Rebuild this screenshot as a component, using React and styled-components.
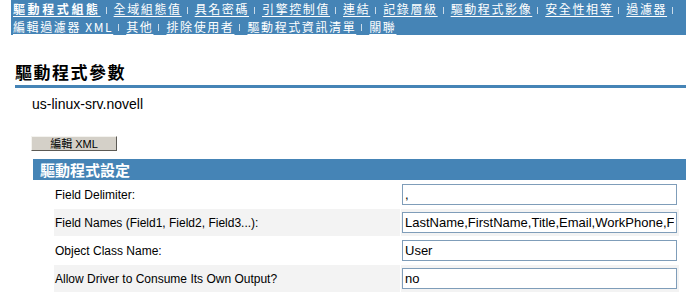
import React from 'react';
import styled, { createGlobalStyle } from 'styled-components';

const GlobalStyle = createGlobalStyle`
  html, body {
    margin: 0;
    padding: 0;
    background: #ffffff;
  }
  body {
    font-family: "Liberation Sans", "Noto Sans CJK TC", sans-serif;
    color: #000;
  }
`;

const Page = styled.div`
  width: 686px;
  height: 302px;
  overflow: hidden;
`;

const NavBar = styled.div`
  margin-left: 11px;
  height: 35px;
  background: #4584b6;
  padding: 0 0 0 2px;
  box-sizing: border-box;
  font-family: "Noto Sans CJK TC", sans-serif;
  font-size: 12px;
  color: #fff;
`;

const NavLine = styled.div`
  display: flex;
  align-items: center;
  white-space: nowrap;
  height: 17.5px;
  line-height: 17.5px;
`;

const NavLink = styled.a`
  color: #fff;
  text-decoration: underline;
  text-underline-offset: 2px;
  font-weight: ${({ current }) => (current ? 700 : 400)};
  letter-spacing: ${({ current }) => (current ? '2.6px' : '1.6px')};
  cursor: pointer;
`;

const Sep = styled.span`
  display: inline-block;
  width: 1px;
  height: 7px;
  margin: 3px 7px 0 5px;
  background: #c9dbea;
`;

const Heading = styled.h1`
  margin: 27px 0 0 15px;
  padding: 0 0 3px 0;
  font-family: "Noto Sans CJK TC", sans-serif;
  font-size: 17px;
  line-height: 20px;
  font-weight: 700;
  letter-spacing: 1.5px;
  border-bottom: 3px solid #4584b6;
`;

const Host = styled.div`
  margin: 8px 0 0 32px;
  font-size: 14px;
  line-height: 16px;
`;

const EditButton = styled.button`
  display: block;
  margin: 24px 0 0 31px;
  width: 86px;
  height: 15px;
  padding: 0;
  background: #d4d0c8;
  border: 1px solid;
  border-color: #f4f3ef #5c5a55 #5c5a55 #f4f3ef;
  font-family: "Liberation Sans", "Noto Sans CJK TC", sans-serif;
  font-size: 11px;
  line-height: 12px;
  color: #000;
`;

const Section = styled.div`
  margin: 8px 0 0 33px;
`;

const SectionBar = styled.div`
  height: 21px;
  background: #4584b6;
  color: #fff;
  padding-left: 7px;
  font-family: "Noto Sans CJK TC", sans-serif;
  font-size: 15px;
  line-height: 21px;
  font-weight: 700;
`;

const Grid = styled.div`
  display: grid;
  grid-template-columns: 346px 278px;
  column-gap: 1px;
  margin-left: 21px;
  padding-top: 1px;
`;

const Label = styled.div`
  height: 27px;
  margin-bottom: 1px;
  background: ${({ shaded }) => (shaded ? '#f3f3f3' : '#ffffff')};
  display: flex;
  align-items: center;
  padding-left: 1px;
  font-size: 12px;
`;

const ValueCell = styled.div`
  height: 27px;
  margin-bottom: 1px;
  background: ${({ shaded }) => (shaded ? '#f3f3f3' : '#ffffff')};
  display: flex;
  align-items: center;
  padding-left: 1px;
`;

const TextInput = styled.input`
  width: 275px;
  height: 21px;
  box-sizing: border-box;
  border: 1px solid #7f9db9;
  padding: 0 2px;
  font-family: "Liberation Sans", sans-serif;
  font-size: 13px;
  color: #000;
  background: #fff;
  outline: none;
`;

const navRow1 = ['全域組態值', '具名密碼', '引擎控制值', '連結', '記錄層級', '驅動程式影像', '安全性相等', '過濾器'];
const navRow2 = ['編輯過濾器 XML', '其他', '排除使用者', '驅動程式資訊清單', '關聯'];

const fields = [
  { label: 'Field Delimiter:', value: ',' },
  { label: 'Field Names (Field1, Field2, Field3...):', value: 'LastName,FirstName,Title,Email,WorkPhone,Fax' },
  { label: 'Object Class Name:', value: 'User' },
  { label: 'Allow Driver to Consume Its Own Output?', value: 'no' },
];

const App = () => {
  return (
    <Page>
      <GlobalStyle />
      <NavBar>
        <NavLine>
          <NavLink current>驅動程式組態</NavLink>
          {navRow1.map((item) => (
            <React.Fragment key={item}>
              <Sep />
              <NavLink>{item}</NavLink>
            </React.Fragment>
          ))}
          <Sep />
        </NavLine>
        <NavLine>
          {navRow2.map((item, i) => (
            <React.Fragment key={item}>
              {i > 0 && <Sep />}
              <NavLink>{item}</NavLink>
            </React.Fragment>
          ))}
        </NavLine>
      </NavBar>

      <Heading>驅動程式參數</Heading>
      <Host>us-linux-srv.novell</Host>

      <EditButton>編輯 XML</EditButton>

      <Section>
        <SectionBar>驅動程式設定</SectionBar>
        <Grid>
          {fields.map((f, i) => (
            <React.Fragment key={f.label}>
              <Label shaded={i % 2 === 1}>{f.label}</Label>
              <ValueCell shaded={i % 2 === 1}>
                <TextInput readOnly defaultValue={f.value} />
              </ValueCell>
            </React.Fragment>
          ))}
        </Grid>
      </Section>
    </Page>
  );
};

export default App;
